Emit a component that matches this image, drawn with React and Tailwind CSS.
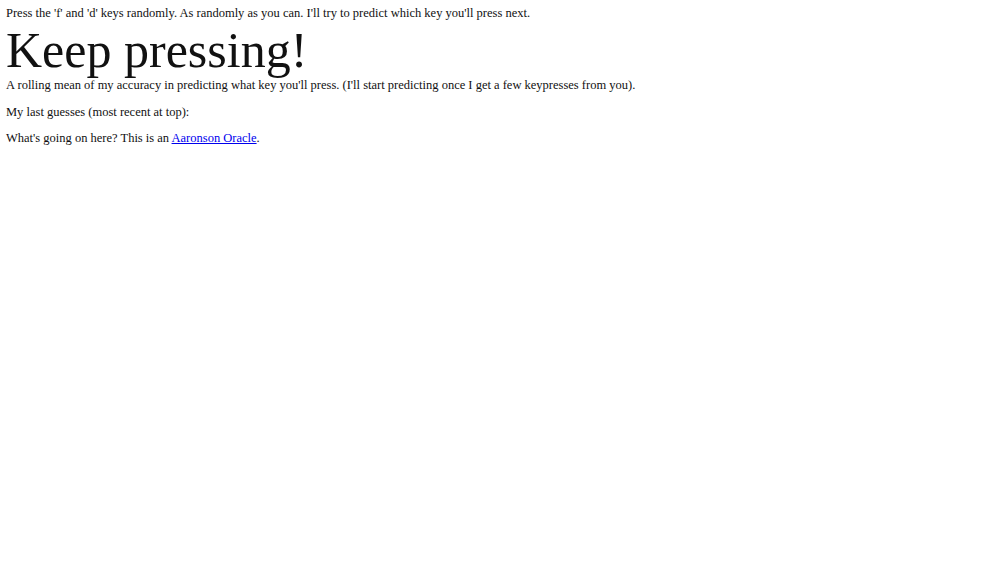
import React from "react";

const App = () => {
  return (
    <div className="min-h-screen bg-white p-[6px] text-[12.5px] leading-[15px] text-[#111] font-['Liberation_Serif',serif]">
      <div>
        Press the 'f' and 'd' keys randomly. As randomly as you can. I'll try to
        predict which key you'll press next.
      </div>

      <h1 className="mt-[4px] mb-[3px] text-[50px] leading-none">Keep pressing!</h1>

      <div>
        A rolling mean of my accuracy in predicting what key you'll press. (I'll
        start predicting once I get a few keypresses from you).
      </div>

      <p className="mt-[11.5px]">My last guesses (most recent at top):</p>

      <p className="mt-[11.5px]">
        What's going on here? This is an{" "}
        <a href="#" className="text-[#0000ee] underline">
          Aaronson Oracle
        </a>
        .
      </p>
    </div>
  );
};

export default App;
